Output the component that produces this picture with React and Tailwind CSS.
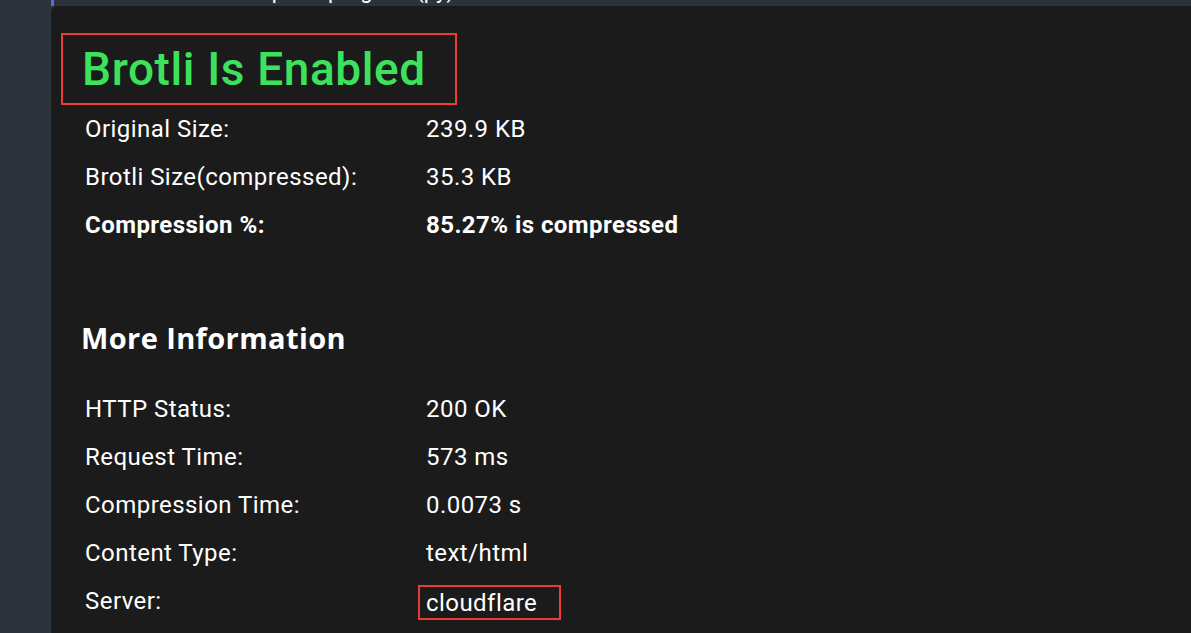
import React from 'react'

const rowsTop = [
  { label: 'Original Size:', value: '239.9 KB' },
  { label: 'Brotli Size(compressed):', value: '35.3 KB' },
  { label: 'Compression %:', value: '85.27% is compressed', bold: true },
]

const rowsInfo = [
  { label: 'HTTP Status:', value: '200 OK' },
  { label: 'Request Time:', value: '573 ms' },
  { label: 'Compression Time:', value: '0.0073 s' },
  { label: 'Content Type:', value: 'text/html' },
  { label: 'Server:', value: 'cloudflare', boxed: true },
]

function Row({ label, value, bold, boxed }) {
  return (
    <div className={`flex items-center h-[48px] pl-[34px] text-[24px] tracking-[0.45px] text-white ${bold ? 'font-bold' : 'font-normal'}`}>
      <div className="w-[341px] shrink-0">{label}</div>
      {boxed ? (
        <div className="ml-[-8px] border-2 border-[#f03a3a] h-[35px] w-[143px] flex items-center pl-[6px] mt-[3px]">
          {value}
        </div>
      ) : (
        <div>{value}</div>
      )}
    </div>
  )
}

export default function App() {
  return (
    <div className="flex w-[1191px] h-[633px] bg-[#2d333b] overflow-hidden" style={{ fontFamily: 'Roboto, sans-serif' }}>
      <div className="w-[51px] shrink-0" />
      <div className="flex-1 flex flex-col">
        {/* scrolled-off line above the panel */}
        <div className="h-[6px] shrink-0 relative overflow-hidden">
          <div className="absolute left-0 top-0 w-[3px] h-[6px] bg-[#6466d8]" />
          <div className="absolute left-[160px] top-[-21px] text-[22px] leading-[24px] text-white whitespace-nowrap">
            a computer program (py)
          </div>
        </div>

        <div className="flex-1 bg-[#1b1b1b] rounded-tl-[6px] pt-[27px]">
          <div className="ml-[10px] w-[396px] h-[72px] border-2 border-[#f03a3a] flex items-center pl-[19px]">
            <h1 className="text-[46px] font-medium text-[#3de25c] leading-none tracking-[0.6px]">Brotli Is Enabled</h1>
          </div>

          {rowsTop.map((r) => (
            <Row key={r.label} {...r} />
          ))}

          <h2
            className="mt-[69px] mb-[27px] h-[40px] flex items-center pl-[30px] text-[29px] tracking-[0.4px] font-bold text-white"
            style={{ fontFamily: '"Open Sans", sans-serif' }}
          >
            More Information
          </h2>

          {rowsInfo.map((r) => (
            <Row key={r.label} {...r} />
          ))}
        </div>
      </div>
    </div>
  )
}
